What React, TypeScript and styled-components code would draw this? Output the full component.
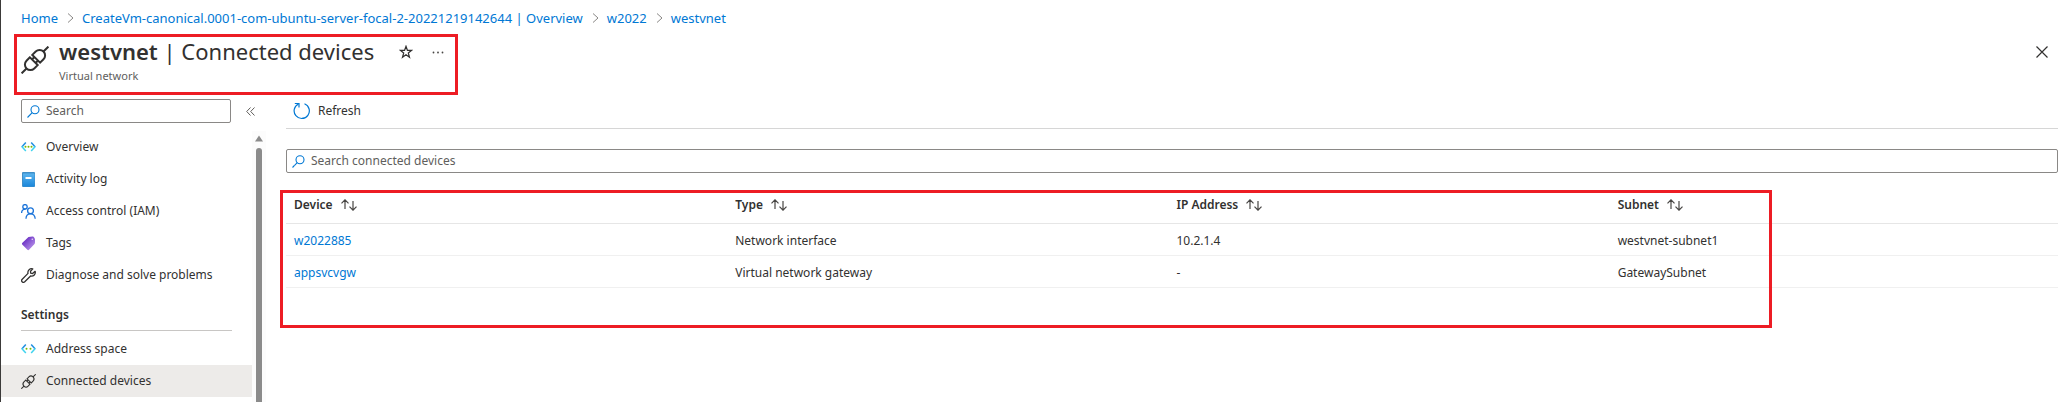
import React from "react";
import styled, { createGlobalStyle } from "styled-components";

const Global = createGlobalStyle`
  *, *::before, *::after { box-sizing: border-box; }
  html, body { margin: 0; padding: 0; background: #fff; }
  body {
    font-family: "Noto Sans", "Open Sans", sans-serif;
    font-size: 12px;
    line-height: 20px;
    color: #323130;
  }
  button, input { font: inherit; color: inherit; }
  a { color: #0078d4; text-decoration: none; }
  svg { display: block; flex: none; }
`;

const Page = styled.div`
  display: flex;
  flex-direction: column;
  min-height: 100vh;
  border-left: 1px solid #3b3a39;
`;

const Breadcrumb = styled.nav`
  display: flex;
  align-items: center;
  gap: 8px;
  padding: 6px 0 0 20px;
  height: 29px;
  font-size: 13px;
`;

const Header = styled.header`
  display: flex;
  align-items: flex-start;
  justify-content: space-between;
  height: 66px;
  padding: 5px 13px 0 13px;
`;

const TitleFrame = styled.div`
  display: flex;
  align-items: flex-start;
  width: 444px;
  height: 61px;
  padding: 2px 6px 0 4px;
  border: 3px solid #ed1c24;
`;

const TitleIcon = styled.div`
  padding: 7px 10px 0 0;
`;

const TitleText = styled.div`
  white-space: nowrap;
`;

const Title = styled.h1`
  margin: 0;
  font-size: 22px;
  line-height: 24px;
  font-weight: 400;
  strong { font-weight: 600; }
`;

const Subtitle = styled.div`
  font-size: 11px;
  line-height: 26px;
  color: #605e5c;
`;

const TitleActions = styled.div`
  display: flex;
  gap: 10px;
  margin-left: auto;
  padding-top: 2px;
`;

const IconButton = styled.button`
  display: flex;
  align-items: center;
  justify-content: center;
  width: 22px;
  height: 22px;
  padding: 0;
  border: 0;
  background: none;
  color: #323130;
`;

const CloseButton = styled(IconButton)`
  margin-top: 7px;
`;

const Body = styled.div`
  display: flex;
  flex: 1;
`;

const Sidebar = styled.aside`
  display: flex;
  flex-direction: column;
  flex: none;
  width: 265px;
`;

const SideTop = styled.div`
  display: flex;
  align-items: center;
  gap: 8px;
  padding: 4px 0 8px 20px;
`;

const SearchBox = styled.label<{ $wide?: boolean }>`
  display: flex;
  align-items: center;
  gap: 6px;
  width: ${(p) => (p.$wide ? "100%" : "210px")};
  height: 24px;
  padding: 0 5px;
  border: 1px solid #8a8886;
  border-radius: 2px;
  input {
    flex: 1;
    min-width: 0;
    height: 20px;
    padding: 0;
    border: 0;
    outline: 0;
    background: none;
  }
  input::placeholder { color: #605e5c; opacity: 1; }
`;

const SideScroll = styled.div`
  display: flex;
  flex: 1;
`;

const Menu = styled.nav`
  flex: 1;
`;

const MenuItem = styled.a<{ $active?: boolean }>`
  display: flex;
  align-items: center;
  gap: 10px;
  height: 32px;
  padding-left: 20px;
  color: #323130;
  background: ${(p) => (p.$active ? "#edebe9" : "transparent")};
`;

const MenuHeading = styled.h2`
  margin: 14px 20px 2px;
  height: 26px;
  border-bottom: 1px solid #c8c6c4;
  font-size: 12px;
  line-height: 20px;
  font-weight: 600;
`;

const ScrollTrack = styled.div`
  display: flex;
  flex-direction: column;
  align-items: center;
  gap: 6px;
  width: 14px;
  padding-top: 4px;
  background: #fcfcfc;
`;

const ScrollThumb = styled.div`
  flex: 1;
  width: 6px;
  border-radius: 3px 3px 0 0;
  background: #8b8b8b;
`;

const Main = styled.main`
  flex: 1;
  min-width: 0;
  padding: 0 8px 0 20px;
`;

const Toolbar = styled.div`
  display: flex;
  align-items: center;
  height: 34px;
  padding-left: 7px;
  border-bottom: 1px solid #d6d6d6;
  margin-bottom: 20px;
`;

const ToolButton = styled.button`
  display: flex;
  align-items: center;
  gap: 7px;
  height: 24px;
  padding: 0;
  margin-bottom: 2px;
  border: 0;
  background: none;
`;

const TableArea = styled.section`
  position: relative;
  margin-top: 17px;
  min-height: 138px;
  padding-top: 2px;
`;

const Highlight = styled.div`
  position: absolute;
  top: 0;
  left: -6px;
  width: calc(84% + 4px);
  height: 138px;
  border: 3px solid #ed1c24;
  pointer-events: none;
`;

const Table = styled.table`
  width: 100%;
  table-layout: fixed;
  border-collapse: collapse;
  th, td {
    padding: 0 0 0 8px;
    text-align: left;
    white-space: nowrap;
  }
  th {
    width: 24.9%;
    height: 31px;
    padding-bottom: 4px;
    font-weight: 600;
    border-bottom: 1px solid #e6e6e6;
  }
  th:last-child { width: auto; }
  td {
    height: 32px;
    padding-top: 3px;
    border-bottom: 1px solid #f0f0f0;
  }
`;

const SortButton = styled.button`
  display: flex;
  align-items: center;
  gap: 8px;
  padding: 0;
  border: 0;
  background: none;
  font-weight: 600;
`;

const PlugIcon = ({ size }: { size: number }) => (
  <svg width={size} height={size} viewBox="0 0 28 28" fill="none" stroke="#323130" strokeWidth={size > 20 ? 2 : 2}>
    <g transform="translate(14 14) rotate(-45)">
      <path d="M-19 0 H-12 M12 0 H19 M-1.500 -2.500 H1.500 M-1.500 2.500 H1.500" />
      <path d="M-1.700 -5.500 H-6.500 A5.500 5.500 0 0 0 -6.500 5.500 H-1.700 Z" />
      <path d="M1.700 -5.500 H6.500 A5.500 5.500 0 0 1 6.500 5.500 H1.700 Z" />
    </g>
  </svg>
);

const SearchIcon = () => (
  <svg width="13" height="13" viewBox="0 0 13 13" fill="none" stroke="#0078d4" strokeWidth="1.100">
    <circle cx="8" cy="4.800" r="4" />
    <path d="M5.200 7.700 L0.500 12.500" />
  </svg>
);

const NetworkIcon = ({ dots }: { dots: number[] }) => (
  <svg width="15" height="15" viewBox="0 0 15 15" fill="none" strokeWidth="1.500">
    <path d="M4.800 2.500 L0.800 7" stroke="#1f8fe0" />
    <path d="M0.800 6.500 L4.800 11" stroke="#3fd3ee" />
    <path d="M10.200 2.500 L14.200 7" stroke="#1f8fe0" />
    <path d="M14.200 6.500 L10.200 11" stroke="#3fd3ee" />
    {dots.map((x) => (
      <circle key={x} cx={x} cy="6.800" r="1" fill="#7fba00" />
    ))}
  </svg>
);

const LogIcon = () => (
  <svg width="15" height="15" viewBox="0 0 15 15">
    <defs>
      <linearGradient id="log" x1="0" y1="0" x2="0" y2="1">
        <stop offset="0" stopColor="#5bb4ee" />
        <stop offset="1" stopColor="#1b87da" />
      </linearGradient>
    </defs>
    <rect x="1" y="0" width="13" height="15" rx="1" fill="#3f8fc8" />
    <rect x="2" y="1.500" width="11.500" height="13" rx="0.500" fill="url(#log)" />
    <rect x="4.500" y="5" width="6" height="2" fill="#fff" />
  </svg>
);

const PeopleIcon = () => (
  <svg width="15" height="15" viewBox="0 0 15 15" fill="none" stroke="#1a73d9" strokeWidth="1.300">
    <circle cx="4" cy="2.800" r="2.200" />
    <path d="M0.600 9 C0.600 6.500 2 5.200 4.500 5.200" />
    <circle cx="9.500" cy="6.800" r="2.900" />
    <path d="M5 14.800 C5 11.500 7 9.800 9.500 9.800 C12 9.800 14 11.500 14.200 14.800" />
  </svg>
);

const TagIcon = () => (
  <svg width="15" height="15" viewBox="0 0 15 15">
    <defs>
      <linearGradient id="tag" x1="0" y1="0" x2="1" y2="1">
        <stop offset="0.200" stopColor="#6a2fc4" />
        <stop offset="0.700" stopColor="#a47ae0" />
      </linearGradient>
    </defs>
    <path d="M7.500 1 L11.500 0.500 Q12.500 0.300 13 1.200 L14 3 V6.500 Q14 7.300 13.500 8 L8 13.800 Q7.200 14.500 6.400 13.800 L1.200 8.500 Q0.600 7.700 1.200 7 Z" fill="url(#tag)" />
    <circle cx="11.300" cy="3.200" r="0.800" fill="#e6d8f8" />
  </svg>
);

const WrenchIcon = () => (
  <svg width="15" height="15" viewBox="0 0 15 15" fill="none" stroke="#323130" strokeWidth="1.300" strokeLinejoin="round">
    <path d="M11.800 0.900 C9 0 6.300 2.300 7 5.400 L1 11.500 C-0.300 13.200 1.800 15.200 3.500 14 L9.600 8 C12.500 8.600 15 6.300 14.100 3.300 L11.600 5.500 L9.700 5.200 L9.500 3.300 Z" />
  </svg>
);

const SortIcon = () => (
  <svg width="16" height="12" viewBox="0 0 16 12" fill="none" stroke="#484644" strokeWidth="1.200">
    <path d="M4 10 V1 M0.500 4.300 L4 0.800 L7.500 4.300 M12 2 V11 M8.500 7.700 L12 11.200 L15.500 7.700" />
  </svg>
);

const Chevron = () => (
  <svg width="8" height="12" viewBox="0 0 8 12" fill="none" stroke="#8a8886" strokeWidth="1">
    <path d="M2 1.500 L7 6 L2 10.500" />
  </svg>
);

const crumbs = [
  "Home",
  "CreateVm-canonical.0001-com-ubuntu-server-focal-2-20221219142644 | Overview",
  "w2022",
  "westvnet",
];

const rows = [
  { device: "w2022885", type: "Network interface", ip: "10.2.1.4", subnet: "westvnet-subnet1" },
  { device: "appsvcvgw", type: "Virtual network gateway", ip: "-", subnet: "GatewaySubnet" },
];

export default function App() {
  return (
    <Page>
      <Global />
      <Breadcrumb aria-label="Breadcrumb">
        {crumbs.map((c, i) => (
          <React.Fragment key={c}>
            {i > 0 && <Chevron />}
            <a href="#">{c}</a>
          </React.Fragment>
        ))}
      </Breadcrumb>
      <Header>
        <TitleFrame>
          <TitleIcon><PlugIcon size={28} /></TitleIcon>
          <TitleText>
            <Title><strong>westvnet</strong> | Connected devices</Title>
            <Subtitle>Virtual network</Subtitle>
          </TitleText>
          <TitleActions>
            <IconButton aria-label="Favorite">
              <svg width="14" height="14" viewBox="0 0 14 14" fill="none" stroke="#323130" strokeWidth="1.200">
                <path d="M7 1.300 L8.400 5.300 H12.700 L9.300 7.900 L10.500 12.300 L7 9.700 L3.500 12.300 L4.700 7.900 L1.300 5.300 H5.600 Z" />
              </svg>
            </IconButton>
            <IconButton aria-label="More">
              <svg width="12" height="3" viewBox="0 0 12 3" fill="#484644">
                <circle cx="1.500" cy="1.500" r="0.900" />
                <circle cx="6" cy="1.500" r="0.900" />
                <circle cx="10.500" cy="1.500" r="0.900" />
              </svg>
            </IconButton>
          </TitleActions>
        </TitleFrame>
        <CloseButton aria-label="Close">
          <svg width="12" height="12" viewBox="0 0 12 12" stroke="#323130" strokeWidth="1.200">
            <path d="M0.500 0.500 L11.500 11.500 M11.500 0.500 L0.500 11.500" />
          </svg>
        </CloseButton>
      </Header>
      <Body>
        <Sidebar>
          <SideTop>
            <SearchBox>
              <SearchIcon />
              <input type="text" placeholder="Search" aria-label="Search" />
            </SearchBox>
            <IconButton aria-label="Collapse menu">
              <svg width="9" height="9" viewBox="0 0 9 9" fill="none" stroke="#605e5c" strokeWidth="1">
                <path d="M4.500 0.500 L0.700 4.500 L4.500 8.500 M8.500 0.500 L4.700 4.500 L8.500 8.500" />
              </svg>
            </IconButton>
          </SideTop>
          <SideScroll>
            <Menu aria-label="Resource menu">
              <MenuItem href="#"><NetworkIcon dots={[4.5, 7.5, 10.5]} />Overview</MenuItem>
              <MenuItem href="#"><LogIcon />Activity log</MenuItem>
              <MenuItem href="#"><PeopleIcon />Access control (IAM)</MenuItem>
              <MenuItem href="#"><TagIcon />Tags</MenuItem>
              <MenuItem href="#"><WrenchIcon />Diagnose and solve problems</MenuItem>
              <MenuHeading>Settings</MenuHeading>
              <MenuItem href="#"><NetworkIcon dots={[5.5, 9.5]} />Address space</MenuItem>
              <MenuItem href="#" $active><PlugIcon size={15} />Connected devices</MenuItem>
            </Menu>
            <ScrollTrack>
              <svg width="8" height="7" viewBox="0 0 8 7" fill="#8b8b8b">
                <path d="M4 0.500 L8 6.500 H0 Z" />
              </svg>
              <ScrollThumb />
            </ScrollTrack>
          </SideScroll>
        </Sidebar>
        <Main>
          <Toolbar>
            <ToolButton>
              <svg width="18" height="18" viewBox="0 0 18 18" fill="none" stroke="#0078d4" strokeWidth="1.200">
                <path d="M11.500 1.800 A7.600 7.600 0 1 1 5.500 2" />
                <path d="M1.800 1.500 H6 V5.500" />
              </svg>
              Refresh
            </ToolButton>
          </Toolbar>
          <SearchBox $wide>
            <SearchIcon />
            <input type="text" placeholder="Search connected devices" aria-label="Search connected devices" />
          </SearchBox>
          <TableArea>
            <Table>
              <thead>
                <tr>
                  {["Device", "Type", "IP Address", "Subnet"].map((h) => (
                    <th key={h} scope="col"><SortButton>{h}<SortIcon /></SortButton></th>
                  ))}
                </tr>
              </thead>
              <tbody>
                {rows.map((r) => (
                  <tr key={r.device}>
                    <td><a href="#">{r.device}</a></td>
                    <td>{r.type}</td>
                    <td>{r.ip}</td>
                    <td>{r.subnet}</td>
                  </tr>
                ))}
              </tbody>
            </Table>
            <Highlight />
          </TableArea>
        </Main>
      </Body>
    </Page>
  );
}
